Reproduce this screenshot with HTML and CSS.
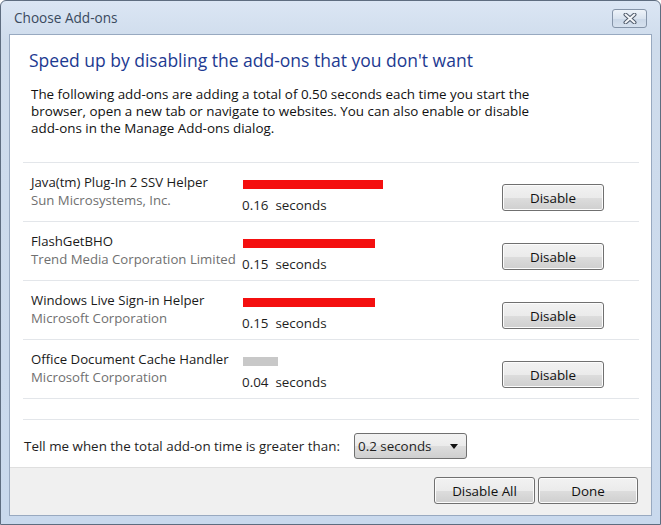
FILE: index.html
```html
<!DOCTYPE html>
<html lang="en">
<head>
  <meta charset="UTF-8" />
  <title>Choose Add-ons</title>
  <link rel="stylesheet" href="styles.css">
</head>
<body>
  <div class="window">
    <div class="titlebar">
      <span class="title">Choose Add-ons</span>
      <button class="close" aria-label="Close">
        <svg width="14" height="11" viewBox="0 0 14 11">
          <path d="M2.5 1.5 L11.5 9.5 M11.5 1.5 L2.5 9.5" stroke="#4f5a6a" stroke-width="4" stroke-linecap="round"/>
          <path d="M2.5 1.5 L11.5 9.5 M11.5 1.5 L2.5 9.5" stroke="#f4f6f9" stroke-width="2" stroke-linecap="round"/>
        </svg>
      </button>
    </div>

    <div class="client">
      <div class="main">
        <h1>Speed up by disabling the add-ons that you don't want</h1>
        <p class="intro">The following add-ons are adding a total of 0.50 seconds each time you start the<br>browser, open a new tab or navigate to websites. You can also enable or disable<br>add-ons in the Manage Add-ons dialog.</p>

        <div class="list">
          <div class="row">
            <div class="info">
              <div class="name">Java(tm) Plug-In 2 SSV Helper</div>
              <div class="vendor">Sun Microsystems, Inc.</div>
            </div>
            <div class="meter">
              <div class="bar slow" style="width: 140px"></div>
              <div class="time">0.16&nbsp; seconds</div>
            </div>
            <button class="btn">Disable</button>
          </div>
          <div class="row">
            <div class="info">
              <div class="name">FlashGetBHO</div>
              <div class="vendor">Trend Media Corporation Limited</div>
            </div>
            <div class="meter">
              <div class="bar slow" style="width: 132px"></div>
              <div class="time">0.15&nbsp; seconds</div>
            </div>
            <button class="btn">Disable</button>
          </div>
          <div class="row">
            <div class="info">
              <div class="name">Windows Live Sign-in Helper</div>
              <div class="vendor">Microsoft Corporation</div>
            </div>
            <div class="meter">
              <div class="bar slow" style="width: 132px"></div>
              <div class="time">0.15&nbsp; seconds</div>
            </div>
            <button class="btn">Disable</button>
          </div>
          <div class="row">
            <div class="info">
              <div class="name">Office Document Cache Handler</div>
              <div class="vendor">Microsoft Corporation</div>
            </div>
            <div class="meter">
              <div class="bar fast" style="width: 35px"></div>
              <div class="time">0.04&nbsp; seconds</div>
            </div>
            <button class="btn">Disable</button>
          </div>
          <div class="spacer"></div>
        </div>

        <div class="threshold">
          <span>Tell me when the total add-on time is greater than:</span>
          <div class="select">
            <span>0.2 seconds</span>
            <span class="arrow"></span>
          </div>
        </div>
      </div>

      <div class="footer">
        <button class="btn">Disable All</button>
        <button class="btn">Done</button>
      </div>
    </div>
  </div>
</body>
</html>
```

FILE: styles.css
```css
html, body {
  margin: 0;
  background: #fff;
}
body {
  font-family: 'Segoe UI', 'Open Sans', sans-serif;
  font-size: 13.4px;
  color: #1e1e1e;
}
.window {
  width: 661px;
  height: 525px;
  box-sizing: border-box;
  border: 1px solid #5e6d80;
  border-radius: 6px 6px 0 0;
  background: linear-gradient(#dbe6f4, #cfdcec 40px, #c9d9ed);
  padding: 0 8px 8px;
  display: flex;
  flex-direction: column;
}
.titlebar {
  height: 33px;
  display: flex;
  align-items: center;
  justify-content: space-between;
  padding-left: 5px;
}
.title {
  font-size: 13.6px;
  color: #3a4a5e;
}
.close {
  width: 35px;
  height: 19px;
  margin: 2px 5px 0 0;
  padding: 0;
  border: 1px solid #8594a8;
  border-radius: 3px;
  background: linear-gradient(#eef3f9, #d9e3ef 50%, #cad7e7 51%, #d6e1ee);
  display: flex;
  align-items: center;
  justify-content: center;
}
.client {
  flex: 1;
  border: 1px solid #98a9c0;
  background: #fff;
  display: flex;
  flex-direction: column;
}
.main {
  flex: 1;
  padding: 0 12px 0 13px;
}
h1 {
  margin: 13px 0 0 6px;
  font-size: 17.5px;
  font-weight: 400;
  color: #1d3a91;
  line-height: 24px;
}
.intro {
  margin: 14px 0 0 8px;
  line-height: 17px;
  color: #111;
}
.list {
  margin-top: 25px;
  border-top: 1px solid #e3e6ea;
}
.row {
  height: 58px;
  border-bottom: 1px solid #e3e6ea;
  display: flex;
  align-items: flex-start;
  padding-left: 8px;
}
.info {
  width: 211px;
  padding-top: 10px;
  font-size: 13.2px;
  line-height: 18px;
  white-space: nowrap;
}
.name {
  color: #1a1a1a;
}
.vendor {
  color: #707070;
}
.meter {
  width: 260px;
  padding-top: 17px;
}
.bar {
  height: 9px;
  margin-left: 1px;
}
.bar.slow {
  background: #f40f0f;
}
.bar.fast {
  background: #c8c8c8;
}
.time {
  margin-top: 8px;
  line-height: 16px;
}
.btn {
  font: inherit;
  color: #111;
  width: 102px;
  height: 27px;
  margin-top: 21px;
  padding: 0;
  border: 1px solid #707070;
  border-radius: 3px;
  background: linear-gradient(#f2f2f2, #ebebeb 50%, #dddddd 51%, #cfcfcf);
  box-shadow: inset 0 0 0 1px #fcfcfc;
}
.spacer {
  height: 20px;
  border-bottom: 1px solid #e3e6ea;
}
.threshold {
  margin-top: 13px;
  padding-left: 1px;
  display: flex;
  align-items: center;
  gap: 14px;
}
.select {
  width: 113px;
  height: 26px;
  box-sizing: border-box;
  border: 1px solid #707070;
  border-radius: 3px;
  background: linear-gradient(#f2f2f2, #ebebeb 50%, #dddddd 51%, #cfcfcf);
  display: flex;
  align-items: center;
  justify-content: space-between;
  padding: 0 8px 0 3px;
}
.arrow {
  width: 0;
  height: 0;
  border-left: 4px solid transparent;
  border-right: 4px solid transparent;
  border-top: 5px solid #111;
}
.footer {
  height: 47px;
  background: #f0f0f0;
  border-top: 1px solid #dfdfdf;
  display: flex;
  justify-content: flex-end;
  align-items: flex-start;
  gap: 3px;
  padding-right: 13px;
}
.footer .btn {
  margin-top: 9px;
  width: 101px;
}
.footer .btn + .btn {
  width: 100px;
}
```
